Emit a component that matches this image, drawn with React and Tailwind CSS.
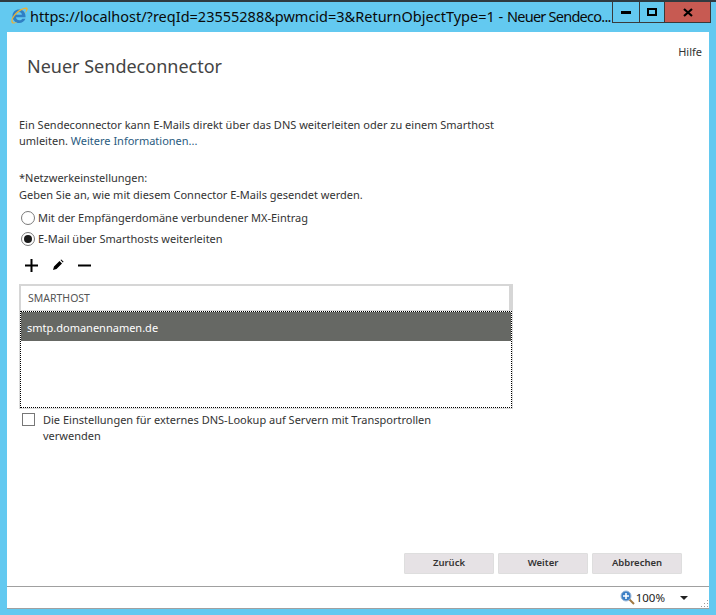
import React from 'react';

const IeIcon = () => (
    <svg width="20" height="20" viewBox="0 0 20 20" className="shrink-0">
        <path d="M3.500 10C3.500 6 6.400 3.500 10 3.500s6.500 2.500 6.500 6.800v1H7c.2 1.900 1.500 3 3.300 3 1.300 0 2.400-.5 3-1.500h3.100c-.9 2.600-3.300 4.200-6.200 4.200-3.700 0-6.700-2.700-6.700-7zM7.100 8.700h5.800C12.700 7 11.600 6 10 6 8.500 6 7.400 7 7.100 8.700z" fill="#2f7fc4" />
        <path d="M3 17C1 15 3.500 9 8.500 5.200 13 1.800 17.500.8 18.500 2c.8 1-.3 3-2.500 5.500 1-2.400 1.400-3.800.8-4.300C15.500 2.200 11 4.500 7.500 8 4.500 11 2.800 14.500 4 16c.8.800 2.500.6 4.500-.2-2.300 1.700-4.400 2.300-5.500 1.200z" fill="#e8b13a" />
    </svg>
);

const Radio = ({ checked }) => (
    <span className="w-[14px] h-[14px] rounded-full border border-[#7a7a7a] bg-white flex items-center justify-center shrink-0">
        {checked && <span className="w-[8px] h-[8px] rounded-full bg-[#1a1a1a]" />}
    </span>
);

const App = () => {
    return (
        <div className="w-[716px] h-[615px] bg-[#63c9f0] border-t-2 border-[#2f3a40] flex flex-col overflow-hidden font-['Noto_Sans',sans-serif]">
            {/* title bar */}
            <div className="h-[30px] flex items-start shrink-0">
                <div className="flex items-center pl-[9px] pt-[3px] w-[612px] gap-[1px]">
                    <IeIcon />
                    <span className="text-[14.5px] leading-[22px] text-[#0a0a0a] whitespace-nowrap">
                        https://localhost/?reqId=23555288&amp;pwmcid=3&amp;ReturnObjectType=1 - <span className="tracking-[-0.75px]">Neuer Sendeco...</span>
                    </span>
                </div>
                <div className="flex h-[21px] border border-t-0 border-[#3a3a3a]">
                    <div className="w-[27px] flex items-center justify-center border-r border-[#3a3a3a]">
                        <span className="w-[10px] h-[3px] bg-black" />
                    </div>
                    <div className="w-[25px] flex items-center justify-center border-r border-[#3a3a3a]">
                        <span className="w-[10px] h-[8px] border-2 border-black" />
                    </div>
                    <div className="w-[45px] bg-[#c75a52] flex items-center justify-center">
                        <svg width="10" height="9" viewBox="0 0 10 9">
                            <path d="M1 1l8 7M9 1L1 8" stroke="#000" strokeWidth="2.200" />
                        </svg>
                    </div>
                </div>
            </div>

            {/* content */}
            <div className="mx-[7px] flex-1 bg-white flex flex-col text-[#333333] text-[11px]">
                <div className="flex justify-between pr-[7px]">
                    <h1 className="pl-[20px] pt-[20px] text-[18px] leading-[28px] text-[#444444]">Neuer Sendeconnector</h1>
                    <span className="pt-[12px] leading-[16px] text-[#333333]">Hilfe</span>
                </div>

                <div className="pl-[12px] w-[500px] mt-[37px] leading-[16px]">
                    <p>
                        Ein Sendeconnector kann E-Mails direkt über das DNS weiterleiten oder zu einem Smarthost umleiten.{' '}
                        <span className="text-[#2a5b80]">Weitere Informationen...</span>
                    </p>
                    <p className="mt-[21px]">*Netzwerkeinstellungen:</p>
                    <p className="mt-[1px]">Geben Sie an, wie mit diesem Connector E-Mails gesendet werden.</p>

                    <div className="mt-[6px] flex flex-col gap-[3px] pl-[2px]">
                        <label className="flex items-center gap-[3px] h-[18px]">
                            <Radio />
                            <span>Mit der Empfängerdomäne verbundener MX-Eintrag</span>
                        </label>
                        <label className="flex items-center gap-[3px] h-[18px]">
                            <Radio checked />
                            <span>E-Mail über Smarthosts weiterleiten</span>
                        </label>
                    </div>

                    <div className="flex items-center h-[20px] mt-[7px] pl-[6px] gap-[14px]">
                        <svg width="13" height="13" viewBox="0 0 13 13">
                            <path d="M6.500 0v13M0 6.500h13" stroke="#000" strokeWidth="2" />
                        </svg>
                        <svg width="12" height="12" viewBox="0 0 12 12">
                            <path d="M1 11l1-3.500 5.500-5.500 2.500 2.500L4.500 10z M8.500 1l.8-.6 2.300 2.300-.8.800z" fill="#000" />
                        </svg>
                        <svg width="13" height="13" viewBox="0 0 13 13">
                            <path d="M0 6.500h13" stroke="#000" strokeWidth="2" />
                        </svg>
                    </div>

                    {/* table */}
                    <div className="mt-[9px] w-[494px]">
                        <div className="h-[26px] border-2 border-r-[4px] border-[#d6d6d6] border-b-0 flex items-center pl-[7px] text-[10.5px] text-[#555555]">
                            SMARTHOST
                        </div>
                        <div className="h-[99px] border border-[#dcdcdc]">
                            <div className="h-full border border-dotted border-black bg-white">
                                <div className="h-[29px] bg-[#666864] text-white text-[11px] flex items-center pl-[6px] pt-[2px]">
                                    smtp.domanennamen.de
                                </div>
                            </div>
                        </div>
                    </div>

                    <label className="flex items-start mt-[3px] pl-[3px]">
                        <span className="w-[13px] h-[13px] border border-[#777777] bg-white shrink-0 mt-[1px]" />
                        <span className="ml-[8px] w-[420px]">
                            Die Einstellungen für externes DNS-Lookup auf Servern mit Transportrollen verwenden
                        </span>
                    </label>
                </div>

                <div className="mt-auto flex justify-end gap-[4px] pr-[27px] pb-[12px]">
                    {['Zurück', 'Weiter', 'Abbrechen'].map((label) => (
                        <button key={label} className="w-[90px] h-[21px] bg-[#e6e2e5] border border-[#dedede] rounded-[1px] text-[9.5px] font-semibold text-[#333333]">
                            {label}
                        </button>
                    ))}
                </div>
            </div>

            {/* status bar */}
            <div className="mx-[7px] h-[23px] bg-white border-t border-b border-[#a0a0a0] shrink-0 flex items-center justify-end text-[11.5px] text-[#222222]">
                <svg width="15" height="15" viewBox="0 0 15 15" className="mr-[1px]">
                    <path d="M9 9l5 5" stroke="#a07840" strokeWidth="2" />
                    <circle cx="6" cy="6" r="5" fill="#3b7fc6" stroke="#9bb8d8" />
                    <path d="M6 3v6M3 6h6" stroke="#fff" strokeWidth="1.600" />
                </svg>
                <span>100%</span>
                <span className="ml-[15px] mr-[13px] w-0 h-0 border-x-[4px] border-x-transparent border-t-[4px] border-t-[#222222]" />
                <svg width="8" height="8" viewBox="0 0 8 8" className="self-end">
                    <path d="M6 0h1v1H6zM3 3h1v1H3zM6 3h1v1H6zM0 6h1v1H0zM3 6h1v1H3zM6 6h1v1H6z" fill="#9a9a9a" />
                </svg>
            </div>
            <div className="h-[6px] shrink-0" />
        </div>
    );
};

export default App;
